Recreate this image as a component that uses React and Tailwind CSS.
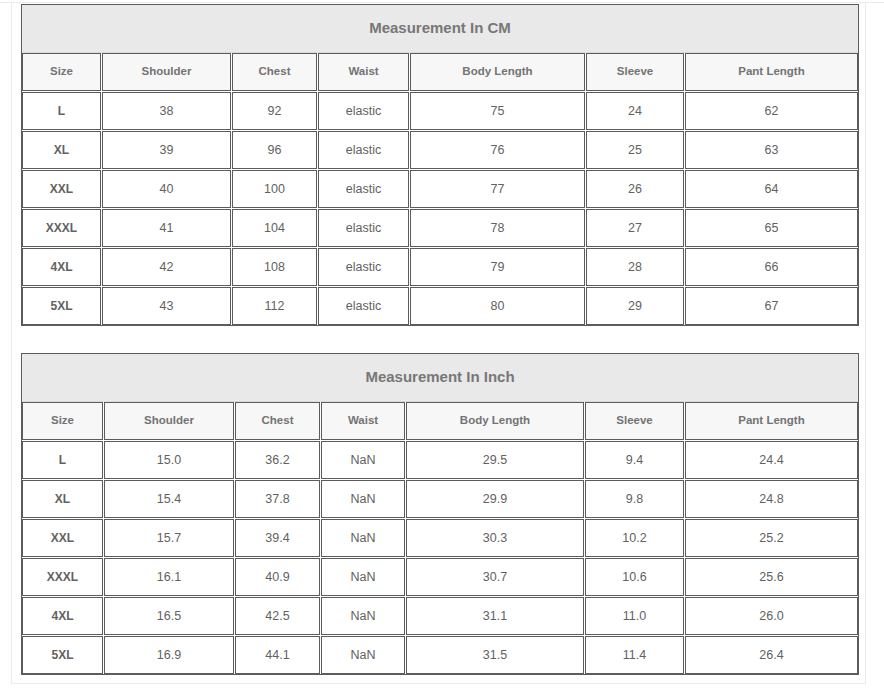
import React from "react";

const headers = ["Size", "Shoulder", "Chest", "Waist", "Body Length", "Sleeve", "Pant Length"];

const cmRows = [
  ["L", "38", "92", "elastic", "75", "24", "62"],
  ["XL", "39", "96", "elastic", "76", "25", "63"],
  ["XXL", "40", "100", "elastic", "77", "26", "64"],
  ["XXXL", "41", "104", "elastic", "78", "27", "65"],
  ["4XL", "42", "108", "elastic", "79", "28", "66"],
  ["5XL", "43", "112", "elastic", "80", "29", "67"],
];

const inchRows = [
  ["L", "15.0", "36.2", "NaN", "29.5", "9.4", "24.4"],
  ["XL", "15.4", "37.8", "NaN", "29.9", "9.8", "24.8"],
  ["XXL", "15.7", "39.4", "NaN", "30.3", "10.2", "25.2"],
  ["XXXL", "16.1", "40.9", "NaN", "30.7", "10.6", "25.6"],
  ["4XL", "16.5", "42.5", "NaN", "31.1", "11.0", "26.0"],
  ["5XL", "16.9", "44.1", "NaN", "31.5", "11.4", "26.4"],
];

function SizeTable({ title, cols, rows, className = "" }) {
  return (
    <div className={`border border-[#5c5c5c] ${className}`}>
      {/* title bar */}
      <div className="h-[48px] bg-[#e9e9e9] border-b border-[#dadada] flex items-center justify-center text-[15px] font-bold text-[#777]">
        {title}
      </div>

      <div className={`grid ${cols} gap-px`}>
        {headers.map((h) => (
          <div
            key={h}
            className="h-[38px] border border-[#5c5c5c] bg-[#f7f7f7] flex items-center justify-center text-[11.5px] font-bold text-[#737373]"
          >
            {h}
          </div>
        ))}

        {rows.map((row) =>
          row.map((v, i) => (
            <div
              key={row[0] + i}
              className={`h-[38px] border border-[#5c5c5c] bg-white flex items-center justify-center text-[#626262] ${
                i === 0 ? "text-[12px] font-bold" : "text-[12.5px]"
              }`}
            >
              {v}
            </div>
          ))
        )}
      </div>
    </div>
  );
}

export default function App() {
  return (
    <div
      className="min-h-[689px] bg-white pt-[2px]"
      style={{ fontFamily: '"Liberation Sans", Arial, sans-serif' }}
    >
      <div className="border-t border-[#ebebeb]">
        <div className="ml-[11px] w-[855px] border-x border-b border-[#ebebeb] pl-[9px] pr-[6px] pt-[1px] pb-[8px]">
          <SizeTable
            title="Measurement In CM"
            cols="grid-cols-[79px_129px_85px_91px_175px_98px_173px]"
            rows={cmRows}
          />
          <SizeTable
            title="Measurement In Inch"
            cols="grid-cols-[81px_130px_85px_84px_178px_99px_173px]"
            rows={inchRows}
            className="mt-[27px]"
          />
        </div>
      </div>
    </div>
  );
}
